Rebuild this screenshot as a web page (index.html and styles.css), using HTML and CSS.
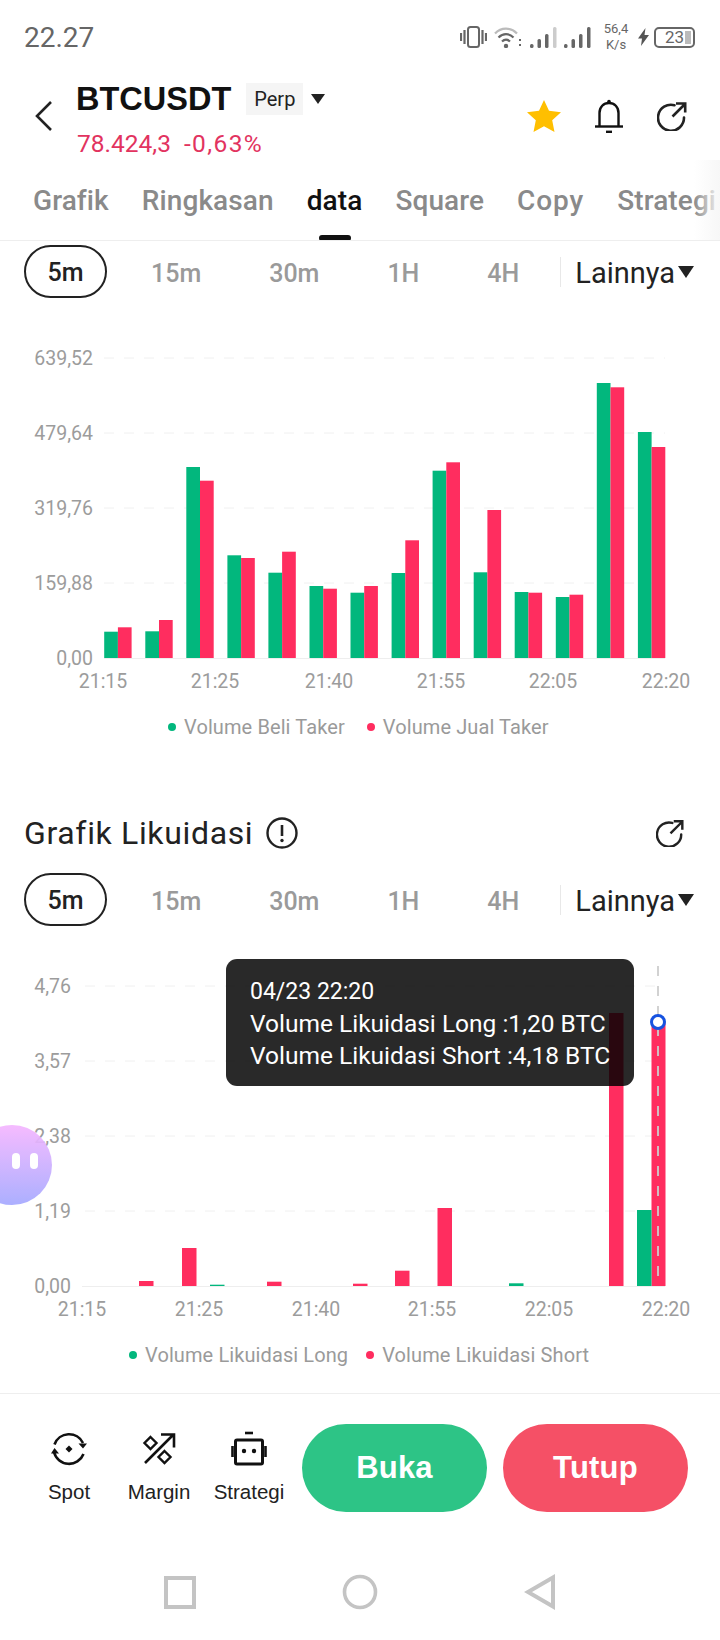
FILE: index.html
```html
<!DOCTYPE html>
<html lang="id">
<head>
  <meta charset="UTF-8" />
  <title>BTCUSDT Data</title>
  <link rel="stylesheet" href="styles.css">
</head>
<body>
  <svg class="defs" width="0" height="0">
    <symbol id="share" viewBox="0 0 30 30">
      <path d="M17.5 4.2A13 13 0 1 0 27 16.5" fill="none" stroke="currentColor" stroke-width="2.6" stroke-linecap="round"/>
      <path d="M15.5 15.5L27.5 3.5M19 2.5H28.2V11.5" fill="none" stroke="currentColor" stroke-width="2.6"/>
    </symbol>
  </svg>

  <div class="page">
    <div class="status-bar">
      <span class="clock">22.27</span>
      <div class="status-icons">
        <svg class="ic-vibrate" width="27" height="22" viewBox="0 0 27 22">
          <rect x="8" y="1" width="11" height="20" rx="2.5" fill="none" stroke="#666" stroke-width="2"/>
          <path d="M1 7v8M4.500 4v14M22.500 4v14M26 7v8" stroke="#666" stroke-width="2.200"/>
        </svg>
        <svg class="ic-wifi" width="28" height="22" viewBox="0 0 28 22">
          <path d="M1 7.500C7 1 17 1 23 7.500" fill="none" stroke="#bbb" stroke-width="2.200"/>
          <path d="M4.500 11.500C9 7 15 7 19.500 11.500M8 15.500C10.500 13 13.500 13 16 15.500" fill="none" stroke="#666" stroke-width="2.200"/>
          <circle cx="12" cy="20" r="2.200" fill="#666"/>
          <path d="M26 13v2M26 18v2" stroke="#666" stroke-width="2"/>
        </svg>
        <svg class="ic-signal" width="28" height="21" viewBox="0 0 28 21">
          <rect x="0" y="17" width="3.500" height="4" rx="1.500" fill="#666"/>
          <rect x="7.500" y="12" width="3.500" height="9" rx="1.500" fill="#666"/>
          <rect x="15" y="7" width="3.500" height="14" rx="1.500" fill="#666"/>
          <rect x="23" y="0" width="3.500" height="21" rx="1.500" fill="#ccc"/>
        </svg>
        <svg class="ic-signal" width="28" height="21" viewBox="0 0 28 21">
          <rect x="0" y="17" width="3.500" height="4" rx="1.500" fill="#666"/>
          <rect x="7.500" y="12" width="3.500" height="9" rx="1.500" fill="#666"/>
          <rect x="15" y="7" width="3.500" height="14" rx="1.500" fill="#666"/>
          <rect x="23" y="0" width="3.500" height="21" rx="1.500" fill="#666"/>
        </svg>
        <div class="speed"><span>56,4</span><span>K/s</span></div>
        <svg class="ic-bolt" width="11" height="18" viewBox="0 0 11 18">
          <path d="M7.500 0L0 10.500h4L3 18l8-11H6.500z" fill="#555"/>
        </svg>
        <div class="battery"><span>23</span><i class="battery-level"></i></div>
      </div>
    </div>

    <div class="symbol-head">
      <svg class="back" width="17" height="30" viewBox="0 0 17 30">
        <path d="M16 1L2 15l14 14" fill="none" stroke="#222" stroke-width="2.600"/>
      </svg>
      <div class="symbol-info">
        <div class="symbol-line">
          <span class="symbol-name">BTCUSDT</span>
          <span class="perp">Perp</span>
          <i class="caret caret-head"></i>
        </div>
        <div class="price-line"><span>78.424,3</span><span class="price-change">-0,63%</span></div>
      </div>
      <div class="head-actions">
        <svg width="34" height="32" viewBox="0 0 34 32">
          <path d="M17 0l5 10.800 12 1.400-8.800 8.100L27.500 32 17 26.200 6.500 32l2.300-11.700L0 12.200l12-1.400z" fill="#ffbf00"/>
        </svg>
        <svg width="28" height="34" viewBox="0 0 28 34">
          <path d="M4.500 27V14C4.500 8 8.500 4 14 4s9.500 4 9.500 10v13" fill="none" stroke="#111" stroke-width="2.400"/>
          <path d="M0 27.500h28" stroke="#111" stroke-width="2.400"/>
          <path d="M11 32.800h6" stroke="#111" stroke-width="2.400"/>
          <circle cx="14" cy="2.500" r="1.800" fill="#111"/>
        </svg>
        <svg class="icon-share" width="30" height="30"><use href="#share"/></svg>
      </div>
    </div>

    <div class="tabs">
      <span class="tab">Grafik</span>
      <span class="tab">Ringkasan</span>
      <span class="tab tab-active">data</span>
      <span class="tab">Square</span>
      <span class="tab tab-copy">Copy</span>
      <span class="tab">Strategi</span>
    </div>

    <div class="tf-row tf-row-first">
      <span class="tf-pill">5m</span>
      <span class="tf-item">15m</span>
      <span class="tf-item">30m</span>
      <span class="tf-item">1H</span>
      <span class="tf-item">4H</span>
      <span class="tf-divider"></span>
      <span class="tf-more">Lainnya</span>
      <i class="caret caret-more"></i>
    </div>

    <svg class="chart chart-taker" width="720" height="400" viewBox="0 0 720 400">
      <g class="grid">
        <path d="M104 58H665M104 133H665M104 208H665M104 283H665"/>
      </g>
      <path class="axis" d="M104 358.500H665"/>
      <g class="y-labels">
        <text x="93" y="65">639,52</text>
        <text x="93" y="140">479,64</text>
        <text x="93" y="215">319,76</text>
        <text x="93" y="290">159,88</text>
        <text x="93" y="365">0,00</text>
      </g>
      <g class="buy">
        <rect x="104.2" y="331.7" width="13.7" height="26.3"/>
        <rect x="145.3" y="331.3" width="13.7" height="26.7"/>
        <rect x="186.3" y="167" width="13.7" height="191"/>
        <rect x="227.4" y="255.3" width="13.7" height="102.7"/>
        <rect x="268.4" y="272.7" width="13.7" height="85.3"/>
        <rect x="309.5" y="286" width="13.7" height="72"/>
        <rect x="350.5" y="292.7" width="13.7" height="65.3"/>
        <rect x="391.6" y="273" width="13.7" height="85"/>
        <rect x="432.6" y="170.7" width="13.7" height="187.3"/>
        <rect x="473.7" y="272.3" width="13.7" height="85.7"/>
        <rect x="514.7" y="292" width="13.7" height="66"/>
        <rect x="555.8" y="297" width="13.7" height="61"/>
        <rect x="596.8" y="83" width="13.7" height="275"/>
        <rect x="637.9" y="132" width="13.7" height="226"/>
      </g>
      <g class="sell">
        <rect x="117.9" y="327.3" width="13.7" height="30.7"/>
        <rect x="159" y="320" width="13.7" height="38"/>
        <rect x="200" y="180.7" width="13.7" height="177.3"/>
        <rect x="241.1" y="258" width="13.7" height="100"/>
        <rect x="282.1" y="251.7" width="13.7" height="106.3"/>
        <rect x="323.2" y="288.7" width="13.7" height="69.3"/>
        <rect x="364.2" y="286" width="13.7" height="72"/>
        <rect x="405.3" y="240.3" width="13.7" height="117.7"/>
        <rect x="446.3" y="162.3" width="13.7" height="195.7"/>
        <rect x="487.4" y="210" width="13.7" height="148"/>
        <rect x="528.4" y="292.7" width="13.7" height="65.3"/>
        <rect x="569.5" y="294.7" width="13.7" height="63.3"/>
        <rect x="610.5" y="87.3" width="13.7" height="270.7"/>
        <rect x="651.6" y="147" width="13.7" height="211"/>
      </g>
      <g class="x-labels">
        <text x="103" y="388">21:15</text>
        <text x="215" y="388">21:25</text>
        <text x="329" y="388">21:40</text>
        <text x="441" y="388">21:55</text>
        <text x="553" y="388">22:05</text>
        <text x="666" y="388">22:20</text>
      </g>
    </svg>

    <div class="legend legend-taker">
      <span class="legend-item"><i class="dot dot-buy"></i>Volume Beli Taker</span>
      <span class="legend-item"><i class="dot dot-sell"></i>Volume Jual Taker</span>
    </div>

    <div class="section-head">
      <span class="section-title">Grafik Likuidasi</span>
      <svg class="info" width="32" height="32" viewBox="0 0 32 32">
        <circle cx="16" cy="16" r="14.500" fill="none" stroke="#222" stroke-width="2.400"/>
        <path d="M16 8v11" stroke="#222" stroke-width="2.600"/>
        <circle cx="16" cy="23.500" r="1.700" fill="#222"/>
      </svg>
      <svg class="icon-share section-share" width="28" height="28"><use href="#share"/></svg>
    </div>

    <div class="tf-row">
      <span class="tf-pill">5m</span>
      <span class="tf-item">15m</span>
      <span class="tf-item">30m</span>
      <span class="tf-item">1H</span>
      <span class="tf-item">4H</span>
      <span class="tf-divider"></span>
      <span class="tf-more">Lainnya</span>
      <i class="caret caret-more"></i>
    </div>

    <div class="liq-chart">
      <svg class="chart" width="720" height="404" viewBox="0 0 720 404">
        <g class="grid">
          <path d="M85 60H665M85 135H665M85 210H665M85 285H665"/>
        </g>
        <path class="axis" d="M82 360.500H665"/>
        <g class="y-labels">
          <text x="71" y="67">4,76</text>
          <text x="71" y="142">3,57</text>
          <text x="71" y="217">2,38</text>
          <text x="71" y="292">1,19</text>
          <text x="71" y="367">0,00</text>
        </g>
        <g class="sell">
          <rect x="139" y="355" width="14.500" height="5"/>
          <rect x="182" y="322" width="14.500" height="38"/>
          <rect x="267" y="355.700" width="14.500" height="4.300"/>
          <rect x="353" y="357.700" width="14.500" height="2.300"/>
          <rect x="395" y="344.700" width="14.500" height="15.300"/>
          <rect x="437.500" y="282" width="14.500" height="78"/>
          <rect x="609" y="87" width="14.500" height="273"/>
          <rect x="651.500" y="96.600" width="14" height="263.400"/>
        </g>
        <g class="buy">
          <rect x="210" y="358.700" width="14.500" height="1.300"/>
          <rect x="509" y="357.300" width="14.500" height="2.700"/>
          <rect x="637" y="284" width="14.500" height="76"/>
        </g>
        <path class="cursor" d="M658 40V360"/>
        <circle class="cursor-dot" cx="658" cy="96" r="6.500"/>
        <g class="x-labels">
          <text x="82" y="390">21:15</text>
          <text x="199" y="390">21:25</text>
          <text x="316" y="390">21:40</text>
          <text x="432" y="390">21:55</text>
          <text x="549" y="390">22:05</text>
          <text x="666" y="390">22:20</text>
        </g>
      </svg>
      <div class="tooltip">
        <div class="tip-time">04/23 22:20</div>
        <div>Volume Likuidasi Long :1,20 BTC</div>
        <div>Volume Likuidasi Short :4,18 BTC</div>
      </div>
    </div>

    <div class="legend legend-liq">
      <span class="legend-item"><i class="dot dot-buy"></i>Volume Likuidasi Long</span>
      <span class="legend-item"><i class="dot dot-sell"></i>Volume Likuidasi Short</span>
    </div>

    <div class="action-bar">
      <div class="shortcut shortcut-spot">
        <svg width="36" height="36" viewBox="0 0 36 36">
          <path d="M3.500 13.500A15.500 15.500 0 0 1 32 12M32.500 23A15.500 15.500 0 0 1 3 21" fill="none" stroke="#111" stroke-width="2.600"/>
          <path d="M27.500 12.500h8.500l-4 5zM0 22.500h8L3.500 17z" fill="#111"/>
          <path d="M18 14.500l3.500 3.500-3.500 3.500-3.500-3.500z" fill="#111"/>
        </svg>
        <span>Spot</span>
      </div>
      <div class="shortcut shortcut-margin">
        <svg width="36" height="36" viewBox="0 0 36 36">
          <path d="M4 32L32 4M20 3.500H33V16.500" fill="none" stroke="#111" stroke-width="2.600"/>
          <path d="M9.500 6l6 6-6 6-6-6zM23.500 20l6 6-6 6-6-6z" fill="#fff" stroke="#111" stroke-width="2.400"/>
        </svg>
        <span>Margin</span>
      </div>
      <div class="shortcut shortcut-bot">
        <svg width="36" height="36" viewBox="0 0 36 36">
          <path d="M14 2h8" stroke="#111" stroke-width="2.600"/>
          <rect x="4.500" y="9" width="27" height="24" rx="1.500" fill="none" stroke="#111" stroke-width="3"/>
          <path d="M1.500 15v11M34.500 15v11" stroke="#111" stroke-width="2.600"/>
          <circle cx="13" cy="20" r="2.200" fill="#111"/>
          <circle cx="23" cy="20" r="2.200" fill="#111"/>
        </svg>
        <span>Strategi</span>
      </div>
      <div class="trade-btn btn-open">Buka</div>
      <div class="trade-btn btn-close">Tutup</div>
    </div>

    <div class="nav-bar">
      <svg width="36" height="36" viewBox="0 0 36 36">
        <rect x="4" y="4" width="28" height="29" fill="none" stroke="#c4c4c4" stroke-width="4"/>
      </svg>
      <svg width="36" height="36" viewBox="0 0 36 36">
        <circle cx="18" cy="18" r="15.500" fill="none" stroke="#c4c4c4" stroke-width="3.600"/>
      </svg>
      <svg width="36" height="36" viewBox="0 0 36 36">
        <path d="M31 3.500V32.500L6 18z" fill="none" stroke="#c4c4c4" stroke-width="4"/>
      </svg>
    </div>

    <div class="assistant"><i></i><i></i></div>
  </div>
</body>
</html>
```
FILE: styles.css
```css
* {
  box-sizing: border-box;
}
body {
  margin: 0;
  padding: 0;
  background: #fff;
  color: #222;
  font-family: Roboto, sans-serif;
}
.defs {
  position: absolute;
}
.page {
  position: relative;
  width: 720px;
  height: 1640px;
  overflow: hidden;
}

/* status bar */
.status-bar {
  display: flex;
  align-items: center;
  justify-content: space-between;
  height: 72px;
  padding: 2px 25px 0 24px;
}
.clock {
  font-size: 28px;
  color: #666;
}
.status-icons {
  display: flex;
  align-items: center;
}
.ic-wifi {
  margin: 0 2px 0 7px;
}
.ic-signal {
  margin-left: 6px;
}
.speed {
  display: flex;
  flex-direction: column;
  align-items: center;
  width: 26px;
  margin-left: 11px;
  font-size: 13px;
  line-height: 16px;
  color: #666;
}
.ic-bolt {
  margin-left: 9px;
}
.battery {
  position: relative;
  width: 41px;
  height: 21px;
  margin-left: 5px;
  padding-left: 9px;
  border: 2px solid #666;
  border-radius: 5px;
  font-size: 17px;
  line-height: 17px;
  color: #666;
}
.battery-level {
  position: absolute;
  top: 2px;
  right: 2px;
  width: 6px;
  height: 13px;
  background: #bbb;
}

/* symbol header */
.symbol-head {
  display: flex;
  align-items: center;
  height: 88px;
  padding-left: 35px;
}
.back {
  flex: none;
}
.symbol-info {
  align-self: flex-start;
  margin: 7px 0 0 24px;
}
.symbol-line {
  display: flex;
  align-items: center;
  height: 40px;
}
.symbol-name {
  font-family: "Liberation Sans", sans-serif;
  font-size: 32.500px;
  font-weight: bold;
  color: #111;
}
.perp {
  margin-left: 15px;
  padding: 0 8px;
  height: 32px;
  line-height: 32px;
  background: #f5f5f5;
  font-size: 20px;
  color: #222;
}
.caret {
  display: block;
  width: 0;
  height: 0;
  border-left: 7px solid transparent;
  border-right: 7px solid transparent;
  border-top: 10px solid #222;
}
.caret-head {
  margin-left: 8px;
}
.price-line {
  display: flex;
  gap: 13px;
  margin-top: 10px;
  padding-left: 1px;
  font-size: 24.500px;
  line-height: 30px;
  color: #e2335f;
}
.price-change {
  letter-spacing: 1.400px;
}
.head-actions {
  display: flex;
  align-items: center;
  gap: 34px;
  margin-left: auto;
  padding-right: 33px;
}

/* tabs */
.tabs {
  position: relative;
  display: flex;
  gap: 33px;
  height: 81px;
  padding: 21px 0 0 33px;
  border-bottom: 1px solid #eee;
  overflow: hidden;
  font-size: 28px;
  font-weight: 500;
  letter-spacing: 0.100px;
  color: #8a8a8a;
}
.tabs::after {
  content: "";
  position: absolute;
  top: 0;
  right: 0;
  bottom: 0;
  width: 26px;
  background: linear-gradient(to right, rgba(250, 250, 250, 0), rgba(247, 247, 247, 1));
}
.tab {
  position: relative;
  flex: none;
  height: 60px;
  line-height: 40px;
}
.tab-active {
  color: #111;
}
.tab-copy {
  letter-spacing: 0.900px;
}
.tab-active::after {
  content: "";
  position: absolute;
  left: 50%;
  bottom: 0;
  width: 32px;
  height: 6px;
  margin-left: -16px;
  border-radius: 3px;
  background: #111;
}

/* timeframe row */
.tf-row {
  display: flex;
  align-items: center;
  height: 53px;
  margin-top: 19px;
  padding-left: 24px;
  font-size: 25px;
  font-weight: 500;
  color: #9a9a9a;
}
.tf-row-first {
  margin-top: 4px;
}
.tf-pill {
  width: 83px;
  height: 53px;
  margin-right: 10px;
  border: 2px solid #222;
  border-radius: 27px;
  text-align: center;
  line-height: 52px;
  color: #222;
}
.tf-item {
  padding: 3px 34px 0;
}
.tf-divider {
  width: 1px;
  height: 30px;
  margin-left: 7px;
  background: #e8e8e8;
}
.tf-more {
  margin-left: 14px;
  padding-top: 3px;
  font-size: 29px;
  font-weight: 400;
  color: #222;
}
.caret-more {
  margin-left: 3px;
  border-left-width: 8px;
  border-right-width: 8px;
  border-top-width: 12px;
}

/* charts */
.chart {
  display: block;
}
.chart-taker {
  margin-top: 2px;
}
.grid path {
  fill: none;
  stroke: #f0f0f0;
  stroke-width: 1;
  stroke-dasharray: 10 10;
}
.axis {
  stroke: #eee;
  stroke-width: 1;
}
.y-labels text,
.x-labels text {
  font-family: Roboto, sans-serif;
  font-size: 19.500px;
  fill: #9c9c9c;
}
.y-labels text {
  text-anchor: end;
}
.x-labels text {
  text-anchor: middle;
}
.buy rect {
  fill: #02b77d;
}
.sell rect {
  fill: #ff2d5f;
}
.cursor {
  stroke: rgba(205, 205, 205, 0.9);
  stroke-width: 2;
  stroke-dasharray: 10 10;
}
.cursor-dot {
  fill: #fff;
  stroke: #1652e0;
  stroke-width: 3;
}
.legend {
  display: flex;
  gap: 22px;
  height: 54px;
  align-items: center;
  font-size: 20px;
  letter-spacing: 0.100px;
  color: #9a9a9a;
}
.legend-taker {
  padding-left: 168px;
}
.legend-liq {
  gap: 18px;
  padding-left: 129px;
  height: 50px;
}
.legend-item {
  display: flex;
  align-items: center;
  gap: 8px;
}
.dot {
  width: 8px;
  height: 8px;
  border-radius: 50%;
}
.dot-buy {
  background: #02b77d;
}
.dot-sell {
  background: #ff2d5f;
}
.section-head {
  display: flex;
  align-items: center;
  height: 42px;
  margin-top: 58px;
  padding: 0 36px 0 24px;
}
.section-title {
  font-size: 32px;
  letter-spacing: 0.650px;
  color: #222;
}
.info {
  margin-left: 13px;
}
.section-share {
  margin-left: auto;
}
.liq-chart {
  position: relative;
}
.tooltip {
  position: absolute;
  top: 33px;
  left: 226px;
  width: 408px;
  height: 127px;
  padding: 16px 0 0 24px;
  border-radius: 11px;
  background: rgba(0, 0, 0, 0.84);
  font-size: 24.500px;
  line-height: 32.500px;
  white-space: nowrap;
  color: #fff;
}
.tip-time {
  margin: 1px 0 -1px;
  font-size: 23px;
}

/* bottom actions */
.action-bar {
  display: flex;
  align-items: flex-start;
  height: 150px;
  margin-top: 13px;
  padding-top: 30px;
  border-top: 1px solid #eee;
}
.shortcut {
  display: flex;
  flex-direction: column;
  align-items: center;
  width: 90px;
  margin-top: 7px;
  font-family: "Liberation Sans", sans-serif;
  font-size: 20.500px;
  color: #222;
}
.shortcut span {
  margin-top: 13px;
  line-height: 24px;
}
.shortcut-spot {
  margin-left: 24px;
}
.trade-btn {
  width: 185px;
  height: 88px;
  border-radius: 44px;
  text-align: center;
  line-height: 88px;
  font-family: "Liberation Sans", sans-serif;
  font-size: 31px;
  font-weight: bold;
  letter-spacing: 0.200px;
  color: #fff;
}
.btn-open {
  margin-left: 8px;
  background: #2dc486;
}
.btn-close {
  margin-left: 16px;
  background: #f55066;
}
.nav-bar {
  display: flex;
  justify-content: space-between;
  padding: 31px 162px 0 162px;
}

/* floating assistant */
.assistant {
  position: absolute;
  top: 1125px;
  left: -28px;
  display: flex;
  gap: 10px;
  align-items: center;
  justify-content: flex-end;
  width: 80px;
  height: 80px;
  padding: 0 14px 0 0;
  border-radius: 50%;
  background: linear-gradient(to bottom, #f5b6ff, #a5a9ff);
  opacity: 0.92;
}
.assistant i {
  width: 8px;
  height: 16px;
  margin-bottom: 9px;
  border-radius: 4px;
  background: #fff;
}
```
